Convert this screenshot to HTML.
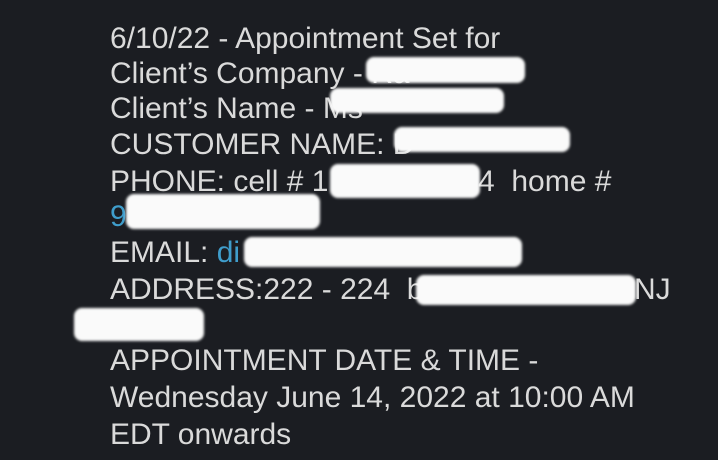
<!DOCTYPE html>
<html><head><meta charset="utf-8"><style>
html,body{margin:0;padding:0;width:718px;height:460px;overflow:hidden;background:#1b1d22;}
.l{position:absolute;left:110px;font-family:"Liberation Sans",sans-serif;font-size:30px;color:#dadada;white-space:nowrap;transform:scaleX(1.0);transform-origin:0 0;line-height:36px;}
.b{color:#3f9dcb}
.w{position:absolute;background:#fafafa;border-radius:8px;filter:blur(1.2px);}
</style></head><body>
<div class="l" style="top:21px">6/10/22 - Appointment Set for</div>
<div class="l" style="top:56px">Client’s Company - Ra</div>
<div class="l" style="top:91px">Client’s Name - Ms</div>
<div class="l" style="top:127px">CUSTOMER NAME: D</div>
<div class="l" style="top:164px">PHONE: cell # 1</div>
<div class="l" style="top:164px;left:478px">4&nbsp;&nbsp;home #</div>
<div class="l b" style="top:199px">9</div>
<div class="l" style="top:235px">EMAIL: <span class="b">di</span></div>
<div class="l" style="top:272px">ADDRESS:222 - 224&nbsp; b</div>
<div class="l" style="top:272px;left:634px">NJ</div>
<div class="l" style="top:343px">APPOINTMENT DATE &amp; TIME -</div>
<div class="l" style="top:380px">Wednesday June 14, 2022 at 10:00 AM</div>
<div class="l" style="top:417px">EDT onwards</div>
<div class="w" style="left:366px;top:57px;width:159px;height:26px"></div>
<div class="w" style="left:330px;top:88px;width:174px;height:25px"></div>
<div class="w" style="left:394px;top:127px;width:176px;height:25px"></div>
<div class="w" style="left:330px;top:164px;width:150px;height:34px"></div>
<div class="w" style="left:126px;top:194px;width:194px;height:35px"></div>
<div class="w" style="left:244px;top:237px;width:278px;height:30px"></div>
<div class="w" style="left:416px;top:275px;width:220px;height:30px"></div>
<div class="w" style="left:74px;top:308px;width:130px;height:33px"></div>
</body></html>
